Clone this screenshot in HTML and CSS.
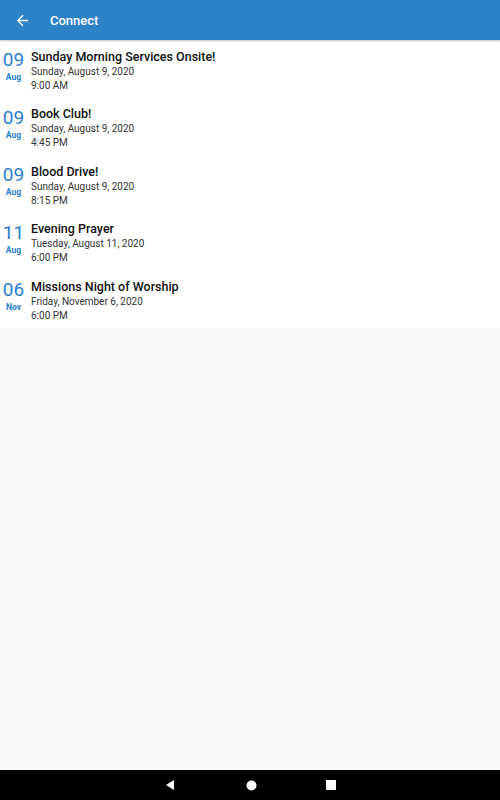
FILE: index.html
```html
<!DOCTYPE html>
<html lang="en">
<head>
    <meta charset="UTF-8">
    <meta name="viewport" content="width=device-width, initial-scale=1.0">
    <title>Connect</title>
    <link rel="stylesheet" href="styles.css">
</head>
<body>
    <div class="app">
        <!-- Toolbar -->
        <header class="toolbar">
            <svg class="back" width="17" height="17" viewBox="0 0 24 24">
                <path d="M20 11H7.83l5.59-5.59L12 4l-8 8 8 8 1.41-1.41L7.83 13H20v-2z" fill="#fff"/>
            </svg>
            <span class="title">Connect</span>
        </header>

        <!-- Event list -->
        <ul class="events">
            <li class="event">
                <div class="date"><span class="day">09</span><span class="month">Aug</span></div>
                <div class="info">
                    <div class="name">Sunday Morning Services Onsite!</div>
                    <div class="line">Sunday, August 9, 2020</div>
                    <div class="line">9:00 AM</div>
                </div>
            </li>
            <li class="event">
                <div class="date"><span class="day">09</span><span class="month">Aug</span></div>
                <div class="info">
                    <div class="name">Book Club!</div>
                    <div class="line">Sunday, August 9, 2020</div>
                    <div class="line">4:45 PM</div>
                </div>
            </li>
            <li class="event">
                <div class="date"><span class="day">09</span><span class="month">Aug</span></div>
                <div class="info">
                    <div class="name">Blood Drive!</div>
                    <div class="line">Sunday, August 9, 2020</div>
                    <div class="line">8:15 PM</div>
                </div>
            </li>
            <li class="event">
                <div class="date"><span class="day">11</span><span class="month">Aug</span></div>
                <div class="info">
                    <div class="name">Evening Prayer</div>
                    <div class="line">Tuesday, August 11, 2020</div>
                    <div class="line">6:00 PM</div>
                </div>
            </li>
            <li class="event">
                <div class="date"><span class="day">06</span><span class="month">Nov</span></div>
                <div class="info">
                    <div class="name">Missions Night of Worship</div>
                    <div class="line">Friday, November 6, 2020</div>
                    <div class="line">6:00 PM</div>
                </div>
            </li>
        </ul>

        <div class="spacer"></div>

        <!-- Android nav bar -->
        <nav class="navbar">
            <svg class="nav-back" width="10" height="12" viewBox="0 0 10 12"><path d="M9 1v10L1 6z" fill="#fff"/></svg>
            <svg width="11" height="11" viewBox="0 0 11 11"><circle cx="5.5" cy="5.5" r="5" fill="#fff"/></svg>
            <svg width="10" height="10" viewBox="0 0 10 10"><rect width="10" height="10" fill="#fff"/></svg>
        </nav>
    </div>
</body>
</html>
```

FILE: styles.css
```css
body {
    margin: 0;
    font-family: Roboto, "Liberation Sans", sans-serif;
    background-color: #fafafa;
}
.app {
    display: flex;
    flex-direction: column;
    height: 800px;
}
.toolbar {
    height: 40px;
    background: #2c82c9;
    display: flex;
    align-items: center;
    box-shadow: 0 1px 2px rgba(0, 0, 0, 0.25);
    position: relative;
    z-index: 1;
}
.back {
    margin-left: 14px;
    margin-right: 19px;
}
.title {
    color: #fff;
    font-size: 13px;
    font-weight: 500;
}
.events {
    list-style: none;
    margin: 0;
    padding: 0;
    background: #fff;
}
.event {
    display: flex;
    height: 57.5px;
    box-sizing: border-box;
    padding-top: 7px;
}
.date {
    width: 27px;
    margin-right: 4px;
    display: flex;
    flex-direction: column;
    align-items: center;
    color: #2a7fcc;
}
.day {
    font-size: 19px;
    font-weight: 400;
    line-height: 25px;
}
.month {
    font-size: 8.5px;
    font-weight: 700;
    line-height: 10px;
}
.info {
    padding-top: 1.5px;
}
.name {
    font-size: 12.5px;
    font-weight: 500;
    color: #111;
    line-height: 16px;
}
.line {
    font-size: 10px;
    color: #333;
    line-height: 14px;
}
.spacer {
    flex: 1;
}
.navbar {
    height: 30px;
    background: #000;
    display: flex;
    align-items: center;
    justify-content: center;
    gap: 69px;
}
.nav-back {
    margin-right: 2px;
}
```
